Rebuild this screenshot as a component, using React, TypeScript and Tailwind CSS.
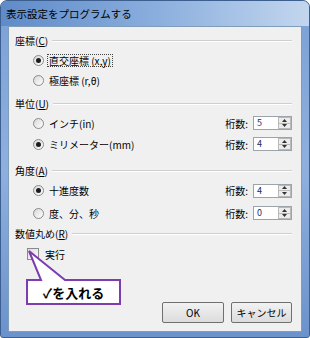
import React from 'react';

const font = { fontFamily: '"Noto Sans CJK JP", "Noto Sans", sans-serif' };

function Radio({ checked }: { checked?: boolean }) {
  return (
    <span className="flex h-[11px] w-[11px] items-center justify-center rounded-full border border-[#8a8a8a] bg-gradient-to-br from-[#d8d8d8] to-white">
      {checked && <span className="h-[5px] w-[5px] rounded-full bg-[#1c1c1c]" />}
    </span>
  );
}

function GroupHeader({ label, hot }: { label: string; hot: string }) {
  return (
    <div className="flex h-[16px] items-center">
      <span className="leading-none">
        {label}(<u>{hot}</u>)
      </span>
      <div className="ml-[4px] h-[2px] flex-1 border-t border-b border-t-[#cfcfcf] border-b-white" />
    </div>
  );
}

function Spinner({ value }: { value: string }) {
  return (
    <div className="flex h-[14px] w-[39px] border border-[#9da3ab] bg-white">
      <span className="flex-1 pl-[3px] text-[9px] leading-[12px] text-[#1a2a6a]">{value}</span>
      <div className="flex w-[13px] flex-col">
        <div className="flex flex-1 items-center justify-center border border-[#b9b9b9] bg-[#ececec]">
          <svg width="5" height="3" viewBox="0 0 5 3"><path d="M0 3 L2.5 0 L5 3 Z" fill="#333" /></svg>
        </div>
        <div className="flex flex-1 items-center justify-center border border-t-0 border-[#b9b9b9] bg-[#ececec]">
          <svg width="5" height="3" viewBox="0 0 5 3"><path d="M0 0 L2.5 3 L5 0 Z" fill="#333" /></svg>
        </div>
      </div>
    </div>
  );
}

function RadioRow({ label, checked, digits, height, focus }: { label: string; checked?: boolean; digits?: string; height: string; focus?: boolean }) {
  return (
    <div className={`flex items-center pl-[18px] ${height}`}>
      <Radio checked={checked} />
      <span className={`ml-[3px] px-[1px] leading-[11px] ${focus ? 'border border-dotted border-[#444]' : 'border border-transparent'}`}>{label}</span>
      {digits !== undefined && (
        <div className="ml-auto flex items-center">
          <span className="mr-[5px]">桁数:</span>
          <Spinner value={digits} />
        </div>
      )}
    </div>
  );
}

export default function App() {
  return (
    <div className="relative h-[338px] w-[310px] overflow-hidden bg-white text-black" style={font}>
      <div className="flex h-full w-full flex-col rounded-t-[7px] rounded-b-[3px] border border-[#3d5f8f] bg-gradient-to-b from-[#7aa0d6] via-[#8fb0df] to-[#6b92cb]">
        {/* title bar */}
        <div className="flex h-[25px] items-center bg-gradient-to-r from-[#5f8bc9] via-[#8aaedd] to-[#c3d6ee] pl-[5px] text-[10.5px] rounded-t-[6px]">
          表示設定をプログラムする
        </div>
        {/* client */}
        <div className="mx-[7px] flex h-[306px] flex-col border border-[#7f9db9] bg-[#f0f0f0] pl-[6px] pr-[9px] pt-[6px] text-[10px]">
          <GroupHeader label="座標" hot="C" />
          <RadioRow label="直交座標 (x,y)" checked focus height="h-[22px]" />
          <RadioRow label="極座標 (r,θ)" height="h-[18px]" />
          <div className="h-[7px]" />
          <GroupHeader label="単位" hot="U" />
          <RadioRow label="インチ(in)" digits="5" height="h-[22px]" />
          <RadioRow label="ミリメーター(mm)" checked digits="4" height="h-[20px]" />
          <div className="h-[9px]" />
          <GroupHeader label="角度" hot="A" />
          <RadioRow label="十進度数" checked digits="4" height="h-[23px]" />
          <RadioRow label="度、分、秒" digits="0" height="h-[22px]" />
          <div className="h-[2px]" />
          <GroupHeader label="数値丸め" hot="R" />
          <div className="flex h-[24px] items-center pl-[12px]">
            <span className="h-[12px] w-[12px] border border-[#8a8a8a] bg-gradient-to-br from-[#dcdcdc] to-white" />
            <span className="ml-[6px]">実行</span>
          </div>
          <div className="flex-1" />
          <div className="mb-[8px] flex justify-end gap-[7px] pr-[0px]">
            <button className="h-[21px] w-[62px] rounded-[2px] border border-[#707070] bg-gradient-to-b from-[#f2f2f2] to-[#dcdcdc] text-[10px]">OK</button>
            <button className="h-[21px] w-[61px] rounded-[2px] border border-[#707070] bg-gradient-to-b from-[#f2f2f2] to-[#dcdcdc] text-[10px]">キャンセル</button>
          </div>
        </div>
        <div className="flex-1" />
      </div>

      {/* callout overlay */}
      <svg className="absolute left-0 top-0" width="310" height="338" viewBox="0 0 310 338">
        <path d="M27 280 H41 L29 251 L65 280 H120 V304 H27 Z" fill="#ffffff" stroke="#7d3cb0" strokeWidth="2" strokeLinejoin="miter" />
      </svg>
      <div className="absolute left-[28px] top-[281px] flex h-[22px] w-[91px] items-center justify-center text-[13px] font-bold leading-none">
        ✓を入れる
      </div>
    </div>
  );
}
